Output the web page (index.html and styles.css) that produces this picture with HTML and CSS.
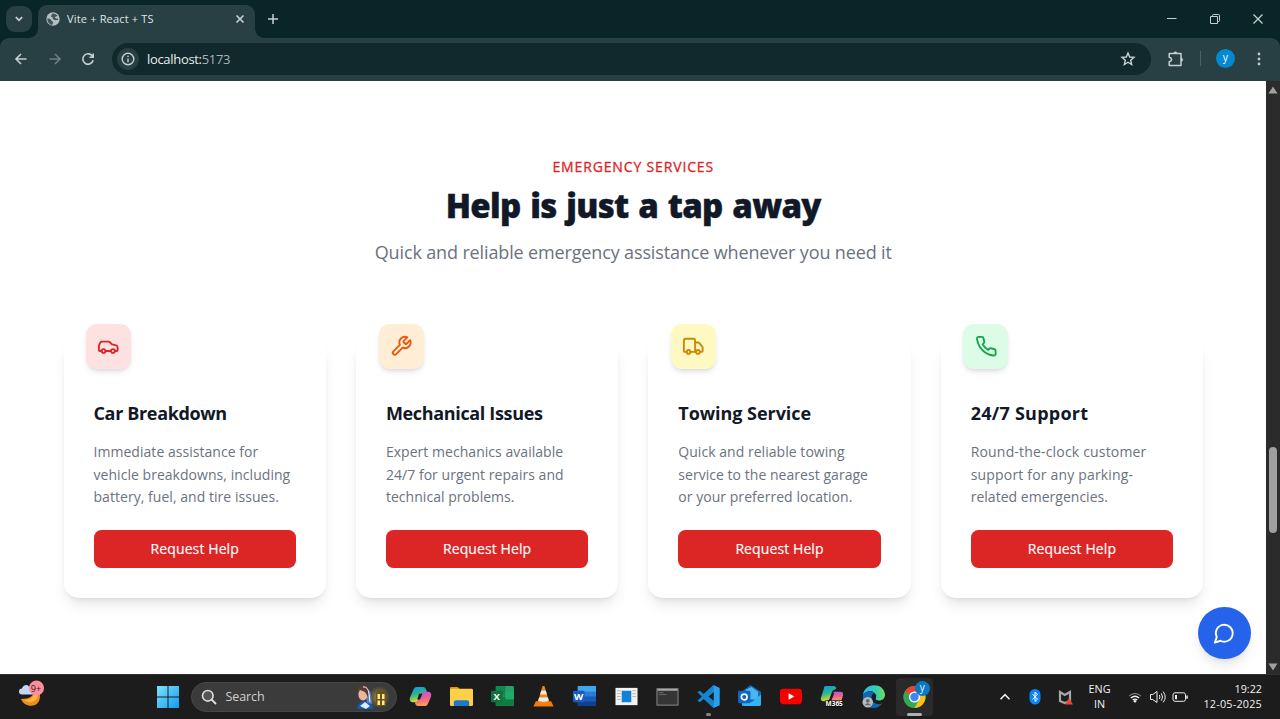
FILE: index.html
```html
<!DOCTYPE html>
<html lang="en">
<head>
<meta charset="utf-8">
<title>Vite + React + TS</title>
<link rel="stylesheet" href="styles.css">
</head>
<body>
<div class="screen">
  <header class="browser">
    <div class="tabs">
      <div class="tab-search"><svg width="10" height="10" viewBox="0 0 10 10"><path class="ln" d="M1.800 3.200 5 6.400 8.200 3.200" stroke-width="1.700"/></svg></div>
      <div class="tab">
        <svg class="globe" width="14" height="14" viewBox="0 0 14 14"><circle cx="7" cy="7" r="6.700" fill="#b5bebf"/><path d="M1.500 6.200c2 .2 3.500 1 4 2.300.4 1 1.500.8 1.600 2.100.1 1-.8 1.500-1 2.300C3.300 12.500 1 9.500 1.500 6.200zM6 1.500c2-.4 4.500.5 5.600 2.300-.8.8-1.900.4-2.400 1.200-.4.900.6 1.600 1.600 1.500.9-.1 1.500.3 1.700 1-.5.7-1.500.4-2.500.6-1.700.2-3.300-.8-3.300-2.300 0-.9-1.600-.5-1.700-1.600 0-1.100 1.600-1.200 1-2.700z" fill="#41575a"/></svg>
        <span class="tab-title">Vite + React + TS</span>
        <svg class="tab-close" width="10" height="10" viewBox="0 0 10 10"><path class="ln" d="M1.500 1.500 8.500 8.500M8.500 1.500 1.500 8.500" stroke-width="1.700"/></svg>
      </div>
      <svg class="new-tab" width="12" height="12" viewBox="0 0 12 12"><path class="ln" d="M6 1v10M1 6h10" stroke-width="1.500"/></svg>
      <div class="win-controls">
        <svg width="12" height="12" viewBox="0 0 12 12"><path class="ln" d="M1 5.500h9.500"/></svg>
        <svg width="12" height="12" viewBox="0 0 12 12"><path class="ln" d="M1.500 3.500h7v7h-7zM3.500 3.500v-1q0-1 1-1h5q1 0 1 1v5q0 1-1 1h-1"/></svg>
        <svg width="12" height="12" viewBox="0 0 12 12"><path class="ln" d="M1.500 1.500l9 9M10.500 1.500l-9 9" stroke-width="1.300"/></svg>
      </div>
    </div>
    <div class="toolbar">
      <div class="nav">
        <svg width="14" height="14" viewBox="0 0 14 14"><path class="ln" d="M12.500 7H2M7 2 2 7l5 5" stroke-width="1.600"/></svg>
        <svg class="dim" width="14" height="14" viewBox="0 0 14 14"><path class="ln" d="M1.500 7H12M7 2l5 5-5 5" stroke-width="1.600"/></svg>
        <svg width="14" height="14" viewBox="0 0 14 14"><path class="ln" d="M11.700 4.700A5.200 5.200 0 1 0 12.100 8.200M12.200 1.500v3.800H8.400" stroke-width="1.600"/></svg>
      </div>
      <div class="omnibox">
        <div class="site-info"><svg width="14" height="14" viewBox="0 0 14 14"><circle class="ln" cx="7" cy="7" r="5.800" stroke-width="1.400"/><path class="ln" d="M7 6.400v3.800M7 3.700v1.300" stroke-width="1.400"/></svg></div>
        <span class="url">localhost:<span class="port">5173</span></span>
        <svg class="star" width="16" height="16" viewBox="0 0 16 16"><path class="ln" d="M8 2l1.700 4 4.300.4-3.300 2.800 1 4.300L8 11.200l-3.700 2.300 1-4.300L2 6.400 6.300 6z" stroke-width="1.400"/></svg>
      </div>
      <svg class="ext" width="18" height="18" viewBox="0 0 18 18"><path class="ln" d="M2.200 3.500H14v12H2.200v-3.700q2.300-.5 2.300-2.300T2.200 7.200z" stroke-width="1.500" stroke-linejoin="round"/><path d="M6.700 3.500a1.700 1.700 0 0 1 3.400 0zM14 8a1.700 1.700 0 0 1 0 3.400z" fill="#c5d0d1" stroke="#c5d0d1" stroke-width=".6"/></svg>
      <span class="divider"></span>
      <span class="avatar">y</span>
      <svg class="kebab" width="4" height="14" viewBox="0 0 4 14"><g fill="#bdc9ca"><circle cx="2" cy="2" r="1.400"/><circle cx="2" cy="7" r="1.400"/><circle cx="2" cy="12" r="1.400"/></g></svg>
    </div>
  </header>

  <div class="viewport">
    <main class="page">
      <div class="heading">
        <p class="eyebrow">EMERGENCY SERVICES</p>
        <h1 class="title">Help is just a tap away</h1>
        <p class="subtitle">Quick and reliable emergency assistance whenever you need it</p>
      </div>
      <div class="cards">
        <section class="card">
          <div class="badge red"><svg class="icon" viewBox="0 0 24 24"><path d="M19 17h2c.6 0 1-.4 1-1v-3c0-.9-.7-1.700-1.500-1.900C18.700 10.600 16 10 16 10s-1.300-1.400-2.200-2.300c-.5-.4-1.100-.7-1.800-.7H5c-.6 0-1.100.4-1.400.900l-1.400 2.900A3.700 3.700 0 0 0 2 12v4c0 .6.4 1 1 1h2"/><circle cx="7" cy="17" r="2"/><path d="M9 17h6"/><circle cx="17" cy="17" r="2"/></svg></div>
          <h2 class="name n1">Car Breakdown</h2>
          <p class="text t1">Immediate assistance for<br>vehicle breakdowns, including<br>battery, fuel, and tire issues.</p>
          <button class="btn">Request Help</button>
        </section>
        <section class="card">
          <div class="badge orange"><svg class="icon" viewBox="0 0 24 24"><path d="M14.700 6.300a1 1 0 0 0 0 1.400l1.600 1.600a1 1 0 0 0 1.400 0l3.770-3.770a6 6 0 0 1-7.940 7.940l-6.910 6.910a2.120 2.120 0 0 1-3-3l6.910-6.910a6 6 0 0 1 7.940-7.940l-3.760 3.760z"/></svg></div>
          <h2 class="name n2">Mechanical Issues</h2>
          <p class="text t2">Expert mechanics available<br>24/7 for urgent repairs and<br>technical problems.</p>
          <button class="btn">Request Help</button>
        </section>
        <section class="card">
          <div class="badge yellow"><svg class="icon" viewBox="0 0 24 24"><path d="M14 18V6a2 2 0 0 0-2-2H4a2 2 0 0 0-2 2v11a1 1 0 0 0 1 1h2"/><path d="M15 18H9"/><path d="M19 18h2a1 1 0 0 0 1-1v-3.650a1 1 0 0 0-.22-.624l-3.480-4.350A1 1 0 0 0 17.520 8H14"/><circle cx="17" cy="18" r="2"/><circle cx="7" cy="18" r="2"/></svg></div>
          <h2 class="name n3">Towing Service</h2>
          <p class="text t3">Quick and reliable towing<br>service to the nearest garage<br>or your preferred location.</p>
          <button class="btn">Request Help</button>
        </section>
        <section class="card">
          <div class="badge green"><svg class="icon" viewBox="0 0 24 24"><path d="M22 16.920v3a2 2 0 0 1-2.180 2 19.790 19.790 0 0 1-8.630-3.070 19.500 19.500 0 0 1-6-6 19.790 19.790 0 0 1-3.070-8.670A2 2 0 0 1 4.110 2h3a2 2 0 0 1 2 1.720 12.840 12.840 0 0 0 .7 2.810 2 2 0 0 1-.45 2.110L8.090 9.910a16 16 0 0 0 6 6l1.270-1.270a2 2 0 0 1 2.110-.45 12.840 12.840 0 0 0 2.810.7A2 2 0 0 1 22 16.920z"/></svg></div>
          <h2 class="name n4">24/7 Support</h2>
          <p class="text t4">Round-the-clock customer<br>support for any parking-<br><span class="tight">related emergencies.</span></p>
          <button class="btn">Request Help</button>
        </section>
      </div>
      <div class="chat"><svg class="icon" viewBox="0 0 24 24"><path d="M7.900 20A9 9 0 1 0 4 16.100L2 22Z"/></svg></div>
    </main>
    <div class="scrollbar">
      <svg class="arrow" width="10" height="8" viewBox="0 0 10 8"><path d="M5 .5 9.500 7.500H.5z"/></svg>
      <span class="thumb"></span>
      <svg class="arrow" width="10" height="8" viewBox="0 0 10 8"><path d="M5 7.500 9.500.5H.5z"/></svg>
    </div>
  </div>

  <footer class="taskbar">
    <svg class="weather" width="28" height="28" viewBox="0 0 28 28"><path d="M17 10c0 6-4 9-13 9 3 9 19 10 19-3 0-3-2-6-6-6z" fill="#f08c1c"/><path d="M17 12c0 5-3 8-10 8 6 4 14 1 14-5z" fill="#ffb545"/><path d="M5 14.500a3 3 0 0 1 0-6 4 4 0 0 1 7-2 4 4 0 0 1 4 8z" fill="#c6d4f5"/><circle cx="19.500" cy="8" r="7.600" fill="#fb8f9c"/><text class="nine" x="19" y="11.500">9+</text></svg>
    <svg class="start" width="24" height="24" viewBox="0 0 24 24"><defs><linearGradient id="wn" x2="1" y2="1"><stop stop-color="#7fe2fb"/><stop offset="1" stop-color="#129bf0"/></linearGradient></defs><path d="M1 1h10.500v10.500H1zM12.500 1H23v10.500H12.500zM1 12.500h10.500V23H1zM12.500 12.500H23V23H12.500z" fill="url(#wn)"/></svg>
    <div class="search">
      <svg width="16" height="16" viewBox="0 0 16 16"><circle cx="6.800" cy="6.800" r="5.300" fill="#555" stroke="#dedede" stroke-width="1.600"/><path d="M10.700 10.700 14.500 14.500" stroke="#dedede" stroke-width="1.900" stroke-linecap="round"/></svg>
      <span class="search-label">Search</span>
      <svg class="lady" width="34" height="26" viewBox="0 0 34 26"><defs><radialGradient id="gl"><stop stop-color="#a88e38"/><stop offset="1" stop-color="#3b3b3b"/></radialGradient></defs><circle cx="24" cy="13" r="11" fill="url(#gl)"/><path d="M2 25q1-8 8-8t9 8z" fill="#1558ad"/><path d="M10 4q5 0 6 7l1 9-5-1z" fill="#5a80c4"/><path d="M5 22l5-4 5 4-4 3z" fill="#d9ecfb"/><ellipse cx="8" cy="10.500" rx="4.600" ry="6" fill="#edb69c"/><path d="M3 7Q3 1 9 1q4 0 5 6l-1 6-3-5-5-2z" fill="#5b3b34"/><path d="M8 3q5-1 6 7l1 8" stroke="#e8eefc" stroke-width="1" fill="none"/><path d="M21 9l4.500-4L31 9v13H21z" fill="#6b531d"/><path d="M22.500 10h2.500v5h-2.500zM27 10h2.500v5H27zM22.500 16.500h2.500v4.500h-2.500zM27 16.500h2.500v4.500H27z" fill="#ffec8c"/></svg>
    </div>
    <div class="apps">
      <div class="app"><svg viewBox="0 0 24 24"><defs><linearGradient id="c1" x2=".3" y2="1"><stop stop-color="#1d8df0"/><stop offset=".55" stop-color="#2ab98a"/><stop offset="1" stop-color="#f0d42b"/></linearGradient><linearGradient id="c2" x2=".2" y2="1"><stop stop-color="#a85be8"/><stop offset=".5" stop-color="#ea5c9b"/><stop offset="1" stop-color="#fd9a56"/></linearGradient></defs><path d="M8 2h7q2 0 3 3l1 3h-4q-2 0-3 2l-2 5q-1 3-4 3H4q-4 0-3-5L5 4q1-2 3-2z" fill="url(#c1)"/><path d="M16 22H9q-2 0-3-4 3 0 4-3l3-6q1-2 3-2h4q4 0 3 5l-3 7q-1 3-4 3z" fill="url(#c2)"/><path d="M10.500 9h3.500l-2.500 6H8.500z" fill="#1c1c1c"/></svg></div>
      <div class="app"><svg viewBox="0 0 24 24"><path d="M0 3q0-1 1-1h7l2 2v4H0z" fill="#d69a17"/><rect y="4" width="24" height="18" rx="1.500" fill="#ffcf48"/><path d="M4 22v-4q0-2 2-2h12q2 0 2 2v4z" fill="#1c78ca"/></svg></div>
      <div class="app"><svg viewBox="0 0 24 24"><rect x="5" y="1" width="19" height="21" rx="1.500" fill="#21a366"/><path d="M5 1h10v10H5z" fill="#168650"/><path d="M5 12h19v10H5z" fill="#107c41"/><path d="M15 7h9v8h-9z" fill="#1fae6a"/><rect y="6" width="12" height="12" rx="1" fill="#107240"/><text class="letter" x="6" y="15.600">X</text></svg></div>
      <div class="app"><svg viewBox="0 0 24 24"><path d="M4 17h16l2.500 5.500h-21z" fill="#f37a0b"/><path d="M11 1h2l5 17q-6 3-12 0z" fill="#f58616"/><path d="M9.600 6h4.800l1.200 4H8.400zM7.400 13h9.200l1 3.500q-5.600 2-11.200 0z" fill="#eeecea"/></svg></div>
      <div class="app"><svg viewBox="0 0 24 24"><rect x="5" y="1" width="19" height="21" rx="1.500" fill="#2b7cd3"/><path d="M5 1h19v6H5z" fill="#41a5ee"/><path d="M5 12h19v5H5z" fill="#185abd"/><path d="M5 17h19v5H5z" fill="#103f91"/><rect y="6" width="12" height="12" rx="1" fill="#185abd"/><text class="letter" x="6" y="15.600">W</text></svg></div>
      <div class="app"><svg viewBox="0 0 24 24"><rect x=".5" y="3" width="23" height="18" fill="#f3f3f3"/><path d="M2 6h4M2 9h4M2 12h4M2 15h4M18 6h4M18 9h4M18 12h4" stroke="#b7b7b7"/><path d="M7 6h10v12H7z" fill="#1082d7"/></svg></div>
      <div class="app"><svg viewBox="0 0 24 24"><rect x="1" y="4" width="22" height="17" fill="#353535" stroke="#8e8e8e"/><path d="M1.500 4h21v2h-21z" fill="#a9a9a9"/><path d="M3 10h8M3 8h5" stroke="#777" stroke-width=".8"/></svg></div>
      <div class="app"><svg viewBox="0 0 24 24"><path d="M17 0 23.500 3v18L17 24 7 14.500 3 18 .5 16.500 5 12 .5 7.500 3 6l4 3.500zM18 7l-6 5 6 5z" fill="#1685d1" fill-rule="evenodd"/><path d="M17.500.3 23.500 3v18l-6 2.700z" fill="#29a0e8"/></svg><i class="dot"></i></div>
      <div class="app"><svg viewBox="0 0 24 24"><path d="M5 6l8-6 11 7v13H5z" fill="#1665b8"/><path d="M8 5l6-3 7 5v8H8z" fill="#49b6f1"/><path d="M4 12l10 6 10-8v10q0 2-2 2H6q-2 0-2-2z" fill="#33b4f0"/><rect y="6" width="13" height="13" rx="1" fill="#1066bd"/><circle cx="6.500" cy="12.500" r="3" fill="none" stroke="#fff" stroke-width="1.700"/></svg></div>
      <div class="app"><svg viewBox="0 0 24 24"><rect x="1" y="4" width="23" height="16" rx="3.500" fill="#f60000"/><path d="M10 8.700v6.600l6-3.300z" fill="#fff"/></svg></div>
      <div class="app"><svg viewBox="0 0 24 24"><path d="M6 1h8q3 0 3 3l-4 2-3 8q-1 3-4 3H4q-4 0-3-4L4 4q0-3 2-3z" fill="url(#c1)"/><path d="M14 7h7q4 0 3 4l-2 6H11z" fill="url(#c2)"/><path d="M13 8h2l-3 8H9.500z" fill="#1c1c1c"/><rect x="5.500" y="16" width="18.500" height="7" fill="#111"/><text class="m365" x="14.800" y="22.300">M365</text></svg></div>
      <div class="app"><svg viewBox="0 0 24 24"><defs><linearGradient id="ed"><stop stop-color="#30b5ee"/><stop offset=".6" stop-color="#35cfaf"/><stop offset="1" stop-color="#72dc55"/></linearGradient></defs><path d="M1 10C3-3 23-3 24 10c0 5-4 7-8 6-3-1-1-3-1-5q-5-9-14-1z" fill="url(#ed)"/><path d="M1 10Q7 4 13 8q-5 3-2 9 4 5 10 2-3 5-9 5Q0 24 1 10z" fill="#0d68b5"/><circle cx="6" cy="18" r="5.500" fill="#b9babb"/><circle cx="6" cy="16.500" r="2" fill="#686868"/><path d="M2.500 21q3.500-4 7 0z" fill="#686868"/></svg></div>
      <div class="app active"><svg viewBox="0 0 24 24"><circle cx="12" cy="12.500" r="11.500" fill="#34a853"/><path d="M12 12.500 2 6.800A11.500 11.500 0 0 1 22 6.800z" fill="#ea4335"/><path d="M12 12.500 22 6.800A11.500 11.500 0 0 1 12 24z" fill="#fbc116"/><path d="M2 6.800A11.500 11.500 0 0 0 12 24l5-8.500-10 0z" fill="#34a853"/><circle cx="12" cy="12.500" r="5.800" fill="#fff"/><circle cx="12" cy="12.500" r="4.400" fill="#4285f4"/></svg><b class="profile">y</b><i class="dot wide"></i></div>
    </div>
    <div class="tray">
      <svg width="12" height="12" viewBox="0 0 12 12"><path class="tr" d="M1.500 8.200 6 3.700l4.500 4.500" stroke-width="1.600"/></svg>
      <svg class="bt" width="12" height="16" viewBox="0 0 12 16"><rect x=".5" width="11" height="15.500" rx="5.500" fill="#0a84f3"/><path d="M3.500 5 8.500 10.200 6 12.500V3L8.500 5.300 3.500 10.500" fill="none" stroke="#fff"/></svg>
      <svg class="shield" width="16" height="16" viewBox="0 0 16 16"><path d="M3 3l4.700 3L13 3v9l-5.300 2L3 12z" fill="none" stroke="#a6a6a6" stroke-width="2.200"/><path d="M12 9l4 6.500H8z" fill="#f04438"/></svg>
      <span class="lang">ENG<br>IN</span>
      <svg class="wifi" width="14" height="14" viewBox="0 0 14 14"><path class="tr" d="M1 6q6-5 12 0" opacity=".55"/><path class="tr" d="M2.800 8q4.200-3.500 8.400 0M4.700 10q2.300-1.900 4.600 0" stroke-width="1.300"/><circle cx="7" cy="11.300" r="1.300" fill="#eee"/></svg>
      <svg class="vol" width="18" height="16" viewBox="0 0 18 16"><path class="tr" d="M1.500 5.500h2.300L8 2.500v11l-4.200-3H1.500zM10.300 6q1.400 2 0 4M12.300 4.300q2.600 3.700 0 7.400M14.200 2.600q4 5.400 0 10.800"/></svg>
      <svg class="bat" width="16" height="12" viewBox="0 0 16 12"><rect class="tr" x="1" y="1.800" width="12.500" height="8.500" rx="2"/><path d="M3 4h2v4.200H3zM14.300 4.500h1.500v3.200h-1.500z" fill="#eee"/></svg>
      <span class="clock"><span>19:22</span><br><span class="date">12-05-2025</span></span>
    </div>
  </footer>
</div>
</body>
</html>
```
FILE: styles.css
```css
* { box-sizing: border-box; }
body { margin: 0; font-family: "Open Sans", "Noto Sans", sans-serif; overflow: hidden; }
p, h1, h2 { margin: 0; white-space: nowrap; }
svg { display: block; flex: none; }
.screen { width: 1280px; height: 719px; display: flex; flex-direction: column; }
.ln { fill: none; stroke: #c5d0d1; }

/* browser chrome */
.browser { height: 81px; background: #0a2528; flex: none; }
.tabs { height: 38px; display: flex; align-items: center; padding-left: 6px; position: relative; }
.tab-search { width: 26px; height: 26px; border-radius: 9px; background: #283f43; display: grid; place-items: center; }
.tab { width: 217px; height: 33px; margin: 5px 0 0 6px; border-radius: 9px 9px 0 0; background: #283f43; display: flex; align-items: center; padding: 0 10px 5px 8px; position: relative; }
.tab::before, .tab::after { content: ""; position: absolute; bottom: 0; width: 9px; height: 9px; }
.tab::before { left: -9px; background: radial-gradient(circle at 0 0, transparent 8.5px, #283f43 9px); }
.tab::after { right: -9px; background: radial-gradient(circle at 100% 0, transparent 8.5px, #283f43 9px); }
.tab-title { font-size: 11px; letter-spacing: .17px; color: #dfe7e7; margin-left: 7px; padding-bottom: 1px; white-space: nowrap; }
.tab-close { margin-left: auto; }
.new-tab { margin-left: 12px; }
.win-controls { margin-left: auto; display: flex; gap: 31px; padding-right: 16px; }
.toolbar { height: 43px; background: #283f43; border-radius: 9px 9px 0 0; display: flex; align-items: center; padding: 0 0 2px 14px; }
.nav { display: flex; gap: 19.5px; width: 98px; }
.dim { opacity: .45; }
.omnibox { width: 1039px; height: 32px; border-radius: 16px; background: #11282c; display: flex; align-items: center; padding: 0 15px 0 5px; flex: none; }
.site-info { width: 22px; height: 22px; border-radius: 50%; background: #283f43; display: grid; place-items: center; }
.url { font-size: 13px; letter-spacing: -.32px; color: #e6eded; margin-left: 8px; }
.port { color: #a7b4b6; }
.star { margin-left: auto; }
.ext { margin-left: 16px; }
.divider { width: 1px; height: 15px; background: #4b6063; margin: 0 15px; }
.avatar { width: 19px; height: 19px; border-radius: 50%; background: #0388d1; color: #fff; font-size: 10.500px; line-height: 17px; text-align: center; }
.kebab { margin-left: 22px; }

/* page */
.viewport { height: 593px; display: flex; flex: none; }
.page { width: 1266px; background: #fff; padding: 76px 63px 0 63.500px; position: relative; }
.heading { display: flex; flex-direction: column; align-items: center; }
.eyebrow { font-size: 14px; line-height: 20px; color: #dc2626; letter-spacing: .85px; -webkit-text-stroke: .3px #dc2626; }
.title { font-size: 33px; font-weight: 800; line-height: 38px; color: #111827; margin-top: 10px; letter-spacing: -.750px; word-spacing: 2px; -webkit-text-stroke: .4px #111827; }
.subtitle { font-size: 18px; line-height: 26px; color: #6b7280; margin-top: 14px; letter-spacing: -.140px; }
.cards { display: grid; grid-template-columns: repeat(4, 262.500px); gap: 29.900px; margin-top: 74px; }
.card { height: 258.500px; border-radius: 15px; background: #fff; padding: 0 30px 30px; display: flex; flex-direction: column; box-shadow: 0 9px 14px -3px rgba(0,0,0,.1), 0 4px 6px -4px rgba(0,0,0,.1); }
.badge { width: 45px; height: 45px; border-radius: 11px; margin: -15px 0 0 -7.300px; display: grid; place-items: center; flex: none; box-shadow: 0 4px 6px -1px rgba(0,0,0,.1), 0 2px 4px -2px rgba(0,0,0,.1); }
.icon { width: 22.500px; height: 22.500px; fill: none; stroke: currentColor; stroke-width: 2; stroke-linecap: round; stroke-linejoin: round; }
.red { background: #fee2e2; color: #dc2626; }
.orange { background: #ffedd5; color: #ea580c; }
.yellow { background: #fef9c3; color: #ca8a04; }
.green { background: #dcfce7; color: #16a34a; }
.name { font-size: 18px; font-weight: 700; line-height: 26px; margin-top: 31px; color: #111827; }
.n1 { letter-spacing: -.350px; }
.n2 { letter-spacing: -.340px; }
.n3 { letter-spacing: -.050px; }
.n4 { letter-spacing: .250px; }
.text { font-size: 14px; line-height: 22.500px; color: #6b7280; margin-top: 15px; }
.t1, .t2, .t3 { letter-spacing: .040px; }
.t4 { letter-spacing: .180px; }
.tight { letter-spacing: .020px; }
.btn { margin-top: auto; height: 37.500px; flex: none; border: 0; border-radius: 7.500px; background: #dc2626; color: #fff; font: 500 14px/37px "Open Sans", "Noto Sans", sans-serif; letter-spacing: .1px; -webkit-text-stroke: .15px #fff; padding: 0; }
.chat { position: absolute; left: 1198.300px; top: 525.500px; width: 52.500px; height: 52.500px; border-radius: 50%; background: #2563eb; color: #fff; display: grid; place-items: center; box-shadow: 0 9px 14px -3px rgba(0,0,0,.1), 0 4px 6px -4px rgba(0,0,0,.1); }
.scrollbar { width: 14px; background: #2b2b2b; display: flex; flex-direction: column; align-items: center; padding: 5px 0 3px; }
.arrow { fill: #a1a1a1; }
.thumb { width: 8px; height: 86px; border-radius: 4px; background: #9f9f9f; margin: 353px 0 auto; }

/* taskbar */
.taskbar { height: 45px; background: #1c1c1c; border-top: 1px solid #303030; display: flex; align-items: center; flex: none; color: #f1f1f1; padding-bottom: 1px; }
.weather { margin: -5px 0 0 17px; }
.nine { font-size: 9px; text-anchor: middle; fill: #39151d; }
.start { margin-left: 111px; }
.search { width: 206px; height: 30px; border-radius: 15px; border: 1px solid #464646; background: #3b3b3b; margin-left: 11px; display: flex; align-items: center; padding: 0 7px 0 9px; }
.search-label { font-size: 12.500px; letter-spacing: -.1px; color: #d1d1d1; margin-left: 8.500px; padding-bottom: 1px; }
.lady { margin-left: auto; }
.apps { display: grid; grid-template-columns: repeat(13, 41.200px); margin-left: 2.500px; }
.app { height: 38px; display: grid; place-items: center; position: relative; }
.app > svg { width: 23px; height: 23px; margin-top: -1px; }
.active::before { content: ""; position: absolute; inset: 0 2px; border-radius: 4px; background: #2a2a2a; }
.active > svg { position: relative; }
.letter { font-size: 10px; font-weight: 700; fill: #fff; text-anchor: middle; }
.m365 { font-size: 6.800px; font-weight: 700; fill: #fff; text-anchor: middle; }
.dot { position: absolute; bottom: 0; left: 18px; width: 5px; height: 3px; border-radius: 2px; background: #858585; }
.wide { left: 13px; width: 15px; background: #b0b0b0; }
.profile { position: absolute; left: 21px; top: 3px; width: 15px; height: 15px; border-radius: 50%; background: #087ac3; font-size: 10px; font-weight: 400; line-height: 13px; text-align: center; }
.tray { display: flex; align-items: center; margin-left: auto; padding-right: 18px; }
.tr { fill: none; stroke: #eee; }
.bt { margin-left: 18px; }
.shield { margin-left: 16px; }
.lang, .clock { font-size: 10.800px; line-height: 15px; text-align: center; padding-bottom: 1px; }
.lang { width: 34px; margin-left: 10px; }
.wifi { margin-left: 11px; }
.vol { margin-left: 7px; }
.bat { margin-left: 5px; }
.clock { text-align: right; width: 72px; margin-left: 2.500px; white-space: nowrap; }
.date { letter-spacing: .220px; }
```
